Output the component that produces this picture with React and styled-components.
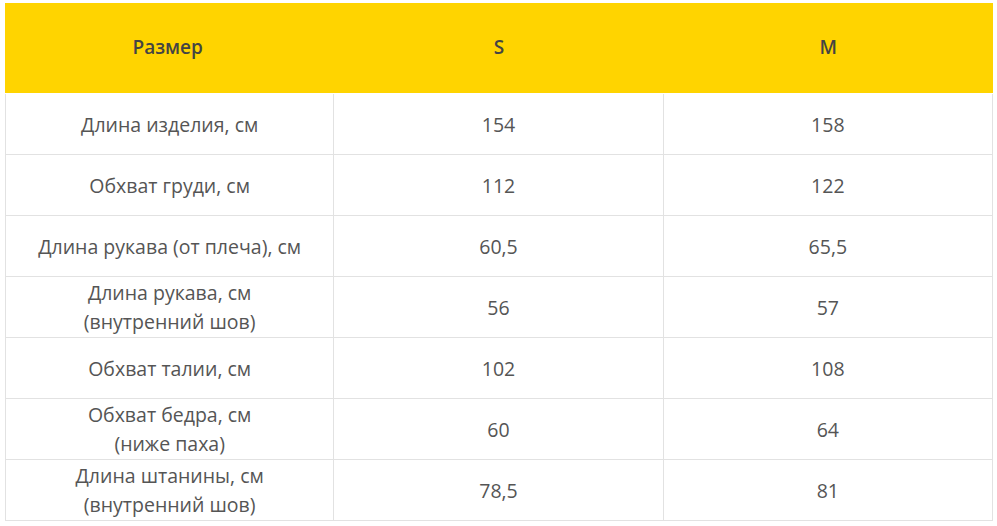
import React from "react";
import styled, { createGlobalStyle } from "styled-components";

const Global = createGlobalStyle`
  html, body { margin: 0; padding: 0; background: #fff; }
  body { font-family: "Open Sans", "Noto Sans", sans-serif; }
`;

const Wrap = styled.div`
  padding: 3px 4px 0 5px;
`;

const Table = styled.div`
  width: 988px;
  display: grid;
  grid-template-columns: repeat(3, 1fr);
`;

const HeadCell = styled.div`
  height: 90px;
  margin-bottom: 1px;
  box-sizing: border-box;
  padding-bottom: 2px;
  padding-right: ${(p) => (p.$first ? "4px" : "0")};
  background: #ffd400;
  display: flex;
  align-items: center;
  justify-content: center;
  font-size: 19px;
  font-weight: 600;
  color: #444;
`;

const Cell = styled.div`
  height: 60px;
  box-sizing: content-box;
  border-right: 1px solid #e2e2e2;
  border-bottom: 1px solid #e2e2e2;
  border-left: ${(p) => (p.$first ? "1px solid #e2e2e2" : "none")};
  display: flex;
  align-items: center;
  justify-content: center;
  text-align: center;
  font-size: 19.5px;
  line-height: 29px;
  color: #555;
`;

const rows = [
  [["Длина изделия, см"], "154", "158"],
  [["Обхват груди, см"], "112", "122"],
  [["Длина рукава (от плеча), см"], "60,5", "65,5"],
  [["Длина рукава, см", "(внутренний шов)"], "56", "57"],
  [["Обхват талии, см"], "102", "108"],
  [["Обхват бедра, см", "(ниже паха)"], "60", "64"],
  [["Длина штанины, см", "(внутренний шов)"], "78,5", "81"],
];

export default function App() {
  return (
    <>
      <Global />
      <Wrap>
        <Table>
          <HeadCell $first>Размер</HeadCell>
          <HeadCell>S</HeadCell>
          <HeadCell>M</HeadCell>
          {rows.map(([label, s, m], i) => (
            <React.Fragment key={i}>
              <Cell $first>
                <div>
                  {label.map((l, j) => (
                    <div key={j}>{l}</div>
                  ))}
                </div>
              </Cell>
              <Cell>{s}</Cell>
              <Cell>{m}</Cell>
            </React.Fragment>
          ))}
        </Table>
      </Wrap>
    </>
  );
}
